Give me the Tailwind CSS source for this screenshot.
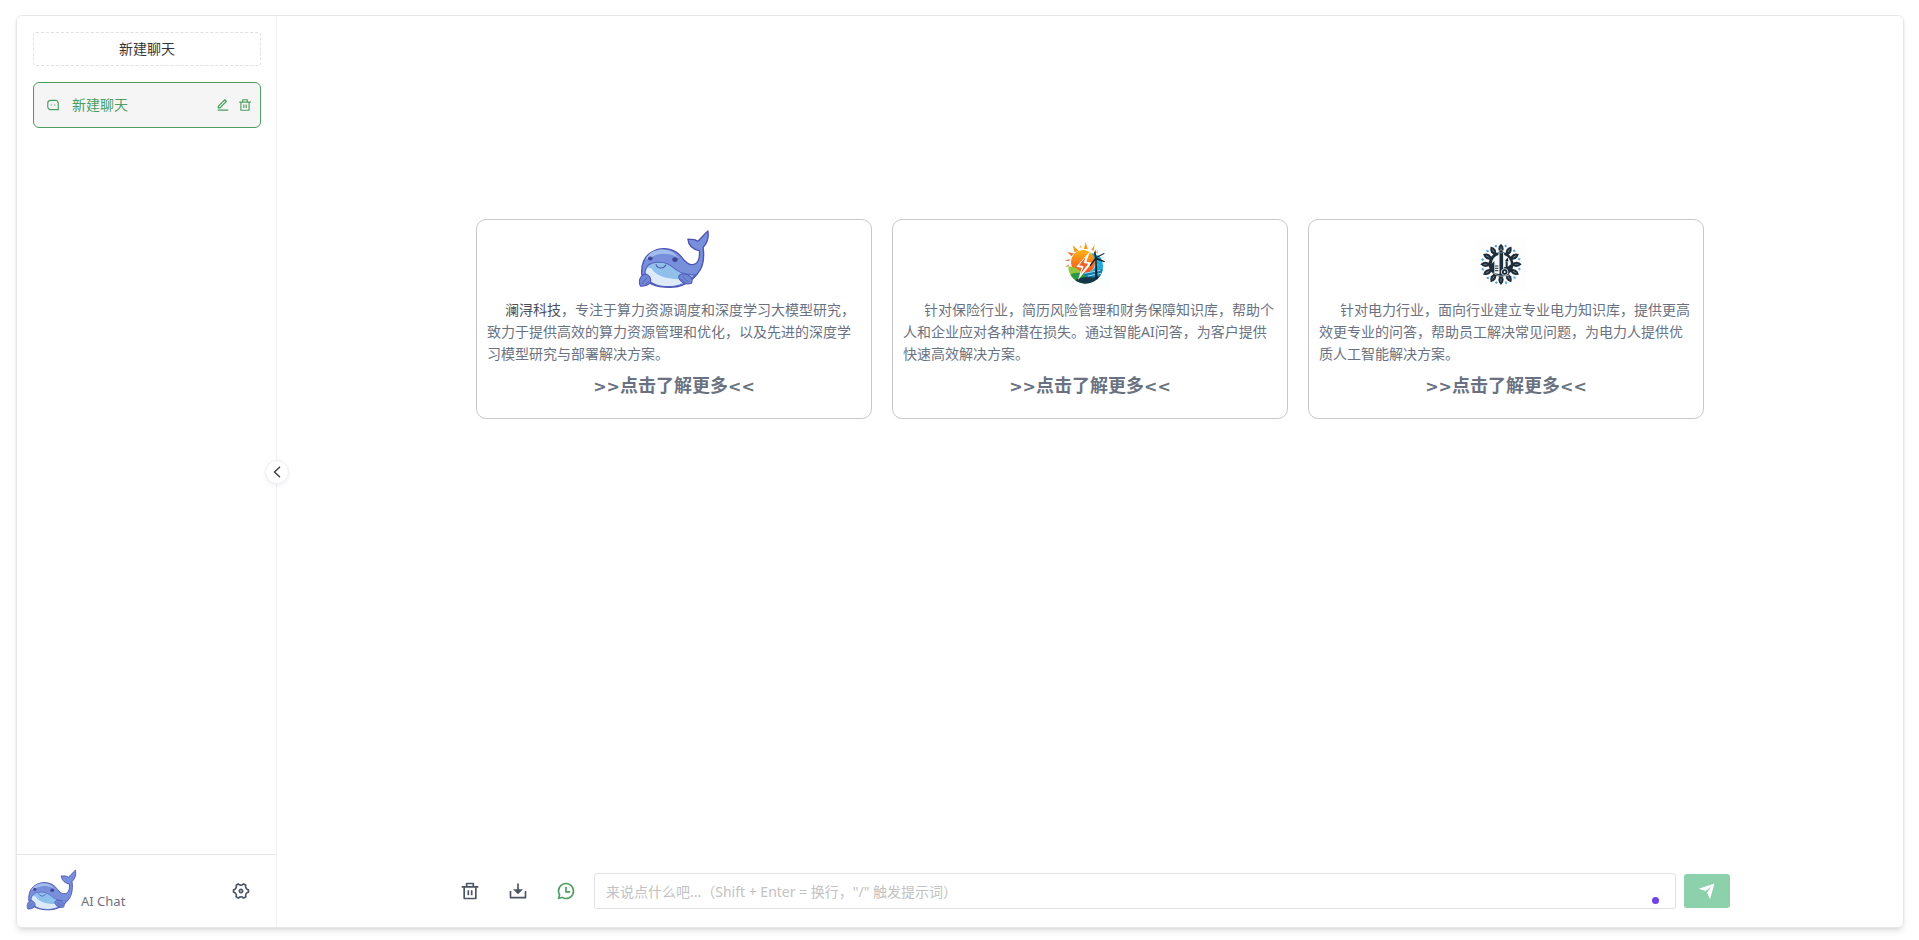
<!DOCTYPE html>
<html lang="zh-CN">
<head>
<meta charset="utf-8">
<meta name="viewport" content="width=device-width, initial-scale=1">
<title>AI Chat</title>
<script src="https://cdn.jsdelivr.net/npm/@tailwindcss/browser@4"></script>
</head>
<body class="bg-white font-['Noto_Sans','Noto_Sans_CJK_SC',sans-serif] text-sm text-[#333639]">
<svg class="hidden" aria-hidden="true">
  <symbol id="trash" viewBox="0 0 24 24"><path fill="currentColor" d="M17 6h5v2h-2v13a1 1 0 0 1-1 1H5a1 1 0 0 1-1-1V8H2V6h5V3a1 1 0 0 1 1-1h8a1 1 0 0 1 1 1v3Zm1 2H6v12h12V8Zm-9 3h2v6H9v-6Zm4 0h2v6h-2v-6ZM9 4v2h6V4H9Z"/></symbol>
  <symbol id="whale" viewBox="25 15 212 180">
    <path fill="#7890dc" stroke="#4f54b4" stroke-width="4" stroke-linejoin="round" d="M36 152C34 124 42 101 62 88C88 70 122 73 144 91C158 103 164 121 182 123C201 124 208 107 206 82C190 79 174 69 172 48C183 50 191 45 201 54C212 46 218 35 231 24C234 42 232 56 217 72C221 103 216 133 200 150C181 174 157 190 119 190C78 190 49 180 36 152Z"/>
    <path fill="#a2bcec" d="M46 108C57 86 79 77 102 79C124 80 137 93 145 104C119 86 82 86 57 106Z"/>
    <path fill="#8fc0ec" stroke="#565fbd" stroke-width="3" d="M45 148C46 128 60 117 84 116C113 115 121 126 140 140C157 151 173 154 193 153C175 177 147 188 112 188C80 187 53 176 45 148Z"/>
    <path fill="#dceafa" d="M49 142C50 133 56 130 64 134C76 154 104 166 145 166L168 172C143 188 104 190 77 180C59 174 49 160 49 142Z"/>
    <path fill="none" stroke="#4a51a9" stroke-width="3" stroke-linecap="round" d="M78 123C82 135 99 137 107 124"/>
    <ellipse cx="61" cy="105" rx="7" ry="6" fill="#404693"/><ellipse cx="134" cy="108" rx="8" ry="7" fill="#404693"/>
    <g fill="#6f87d4" stroke="#4f54b4" stroke-width="3" stroke-linejoin="round">
      <path d="M47 151C58 154 66 165 61 176C56 184 45 187 32 187C27 179 28 166 34 158Q39 152 47 151Z"/>
      <path d="M145 157C151 145 170 150 181 160C186 165 185 176 181 179C162 184 145 172 145 157Z"/>
      <path fill="none" stroke-width="2" d="M36 180Q43 169 52 162M47 182L57 172M156 157Q164 169 174 174M151 165Q158 174 167 178"/>
    </g>
  </symbol>
</svg>

<div class="flex h-screen pt-[15px] pr-[15px] pb-3 pl-4">
  <div class="flex min-w-0 flex-1 rounded-md border border-gray-200 shadow-md">

    <aside class="relative flex w-[260px] shrink-0 flex-col border-r border-[#efeff5]">
      <div class="flex flex-1 flex-col gap-4 p-4 pr-[15px]">
        <button class="h-[34px] rounded-[3px] border border-dashed border-[#e0e0e6]">新建聊天</button>
        <div class="flex h-[46px] items-center rounded-md border border-[#4b9e5f] bg-neutral-100 pr-2 pl-3 text-[#4b9e5f]">
          <svg class="size-[14px]" viewBox="0 0 24 24"><path fill="currentColor" d="M2 8.994A5.99 5.99 0 0 1 8 3h8c3.313 0 6 2.695 6 5.994V21H8c-3.313 0-6-2.695-6-5.994V8.994ZM20 19V8.994A4.004 4.004 0 0 0 16 5H8a3.99 3.99 0 0 0-4 3.994v6.012A4.004 4.004 0 0 0 8 19h12Zm-6-8h2v2h-2v-2Zm-6 0h2v2H8v-2Z"/></svg>
          <a href="#" class="ml-3 flex-1">新建聊天</a>
          <div class="flex gap-2">
            <button aria-label="编辑"><svg class="size-[14px]" viewBox="0 0 24 24"><path fill="currentColor" d="m6.414 15.89 9.728-9.728-1.414-1.414L5 14.476v1.414h1.414Zm.829 2H3v-4.243L14.435 2.212a1 1 0 0 1 1.414 0l2.829 2.829a1 1 0 0 1 0 1.414L7.243 17.89ZM3 19.89h18v2H3v-2Z"/></svg></button>
            <button aria-label="删除"><svg class="size-[14px]"><use href="#trash"/></svg></button>
          </div>
        </div>
      </div>
      <footer class="flex h-[73px] items-center border-t border-gray-200 pr-[15px] pl-[9px]">
        <svg class="mb-1 h-[43px] w-[51px]" role="img" aria-label="澜浔科技"><use href="#whale"/></svg>
        <span class="mt-5 ml-1 flex-1 text-[13px] text-gray-500">AI Chat</span>
        <button class="flex size-10 items-center justify-center text-[#4b5563]" aria-label="设置">
          <svg class="size-5" viewBox="0 0 24 24"><path fill="currentColor" d="M2 11.9998C2 11.1353 2.1097 10.2964 2.31595 9.49631C3.40622 9.55283 4.48848 9.01015 5.0718 7.99982C5.65467 6.99025 5.58406 5.78271 4.99121 4.86701C6.18354 3.69529 7.66832 2.82022 9.32603 2.36133C9.8222 3.33385 10.8333 3.99982 12 3.99982C13.1667 3.99982 14.1778 3.33385 14.674 2.36133C16.3317 2.82022 17.8165 3.69529 19.0088 4.86701C18.4159 5.78271 18.3453 6.99025 18.9282 7.99982C19.5115 9.01015 20.5938 9.55283 21.6841 9.49631C21.8903 10.2964 22 11.1353 22 11.9998C22 12.8643 21.8903 13.7032 21.6841 14.5033C20.5938 14.4468 19.5115 14.9895 18.9282 15.9998C18.3453 17.0094 18.4159 18.2169 19.0088 19.1326C17.8165 20.3043 16.3317 21.1794 14.674 21.6383C14.1778 20.6658 13.1667 19.9998 12 19.9998C10.8333 19.9998 9.8222 20.6658 9.32603 21.6383C7.66832 21.1794 6.18354 20.3043 4.99121 19.1326C5.58406 18.2169 5.65467 17.0094 5.0718 15.9998C4.48848 14.9895 3.40622 14.4468 2.31595 14.5033C2.1097 13.7032 2 12.8643 2 11.9998ZM6.80385 14.9998C7.43395 16.0912 7.61458 17.3459 7.36818 18.5236C7.77597 18.8138 8.21005 19.0652 8.66489 19.2741C9.56176 18.4712 10.7392 17.9998 12 17.9998C13.2608 17.9998 14.4382 18.4712 15.3351 19.2741C15.7899 19.0652 16.224 18.8138 16.6318 18.5236C16.3854 17.3459 16.566 16.0912 17.1962 14.9998C17.8262 13.9085 18.8225 13.1248 19.9655 12.7493C19.9884 12.5015 20 12.2516 20 11.9998C20 11.7481 19.9884 11.4981 19.9655 11.2504C18.8225 10.8749 17.8262 10.0912 17.1962 8.99982C16.566 7.90845 16.3854 6.65378 16.6318 5.47605C16.224 5.18588 15.7899 4.93445 15.3351 4.72552C14.4382 5.52844 13.2608 5.99982 12 5.99982C10.7392 5.99982 9.56176 5.52844 8.66489 4.72552C8.21005 4.93445 7.77597 5.18588 7.36818 5.47605C7.61458 6.65378 7.43395 7.90845 6.80385 8.99982C6.17376 10.0912 5.17754 10.8749 4.0345 11.2504C4.01157 11.4981 4 11.7481 4 11.9998C4 12.2516 4.01157 12.5015 4.0345 12.7493C5.17754 13.1248 6.17376 13.9085 6.80385 14.9998ZM12 14.9998C10.3431 14.9998 9 13.6567 9 11.9998C9 10.3429 10.3431 8.99982 12 8.99982C13.6569 8.99982 15 10.3429 15 11.9998C15 13.6567 13.6569 14.9998 12 14.9998ZM12 12.9998C12.5523 12.9998 13 12.5521 13 11.9998C13 11.4475 12.5523 10.9998 12 10.9998C11.4477 10.9998 11 11.4475 11 11.9998C11 12.5521 11.4477 12.9998 12 12.9998Z"/></svg>
        </button>
      </footer>
      <button class="absolute top-1/2 -right-px flex size-6 translate-x-1/2 -translate-y-1/2 items-center justify-center rounded-full border border-[#efeff5] bg-white shadow-[0_2px_4px_rgba(0,0,0,0.06)]" aria-label="收起侧栏">
        <svg class="h-3 w-2" viewBox="0 0 8 12" fill="none" stroke="currentColor" stroke-width="1.3"><path d="M7 .8 1.5 6 7 11.2"/></svg>
      </button>
    </aside>

    <div class="flex min-w-0 flex-1 flex-col">
      <main class="flex-1 pt-[203px]">
        <div class="mx-auto grid max-w-[1228px] grid-cols-3 gap-5 text-gray-500">
          <article class="min-h-[200px] rounded-[10px] border border-[#c8c8cc] px-[10px]">
            <div class="flex h-[79px] items-end justify-center pb-[10px]">
              <svg class="h-[61px] w-[72px]" role="img" aria-label="澜浔科技"><use href="#whale"/></svg>
            </div>
            <p class="indent-[18px] leading-[22px]"><span class="leading-none text-[#4b5058]">澜浔科技</span>，专注于算力资源调度和深度学习大模型研究，致力于提供高效的算力资源管理和优化，以及先进的深度学习模型研究与部署解决方案。</p>
            <a href="#" class="mt-1 block text-center text-lg leading-8 font-bold"><span class="font-['DejaVu_Sans'] text-base leading-none">&gt;&gt;</span>点击了解更多<span class="font-['DejaVu_Sans'] text-base leading-none">&lt;&lt;</span></a>
          </article>

          <article class="min-h-[200px] rounded-[10px] border border-[#c8c8cc] px-[10px]">
            <div class="flex h-[79px] items-end justify-center pr-[10px] pb-[10px]">
              <svg class="size-[50px] bg-[#fcfefd]" viewBox="15 21 150 150" role="img" aria-label="保险行业">
                <defs>
                  <linearGradient id="sun" x1="0" y1="0" x2="0" y2="1"><stop offset="0" stop-color="#fcb414"/><stop offset="1" stop-color="#f04a24"/></linearGradient>
                  <clipPath id="disc"><circle cx="92" cy="103" r="52"/></clipPath>
                </defs>
                <path fill="#f79a1c" d="M60 65 53 40 72 57ZM86 55 92 30 99 55ZM106 58 119 38 115 63Z"/>
                <path fill="#f26a2a" d="M52 74 36 60 60 65ZM45 88 30 86 48 80ZM42 103 31 105 44 95Z"/>
                <path fill="#f8b13c" d="m73 46 4-7 3 9ZM122 62l7-9-1 12Z"/>
                <g clip-path="url(#disc)">
                  <path fill="#fff" d="M40 50h110v110H40z"/>
                  <path fill="#20a9dc" d="M112 63 150 80V140H82L96 112Z"/>
                  <path fill="#9bddeb" d="m98 117 26-24 4 6-24 24Z"/>
                  <circle cx="84" cy="90" r="36" fill="url(#sun)"/>
                  <path fill="#91c83e" d="M38 103Q65 103 82 124L96 136 90 155H38Z"/>
                  <path fill="#2b9847" d="M42 129Q72 112 108 136L92 155H60Z"/>
                  <path fill="#157baf" d="M82 124 145 111V142H104Z"/>
                  <path stroke="#9be0ef" stroke-width="3" d="M88 124 136 115M98 132 139 124"/>
                  <path fill="#163747" d="M53 149Q78 132 107 136 126 139 141 130L132 160H65Z"/>
                </g>
                <path fill="#fff" d="M105 58 64 104 80 107 69 144 111 92 94 89Z"/>
                <path fill="#f2602a" d="M92 75 72 100 86 103 77 126 100 95 86 93Z"/>
                <path fill="#14262f" d="M121 84 120 142H128L125 83 148 91 150 88 126 77 149 65 147 63 124 74 121 53 117 63 120 78 104 100 107 103Z"/>
              </svg>
            </div>
            <p class="indent-[21px] leading-[22px]">针对保险行业，简历风险管理和财务保障知识库，帮助个人和企业应对各种潜在损失。通过智能AI问答，为客户提供快速高效解决方案。</p>
            <a href="#" class="mt-1 block text-center text-lg leading-8 font-bold"><span class="font-['DejaVu_Sans'] text-base leading-none">&gt;&gt;</span>点击了解更多<span class="font-['DejaVu_Sans'] text-base leading-none">&lt;&lt;</span></a>
          </article>

          <article class="min-h-[200px] rounded-[10px] border border-[#c8c8cc] px-[10px]">
            <div class="flex h-[79px] items-end justify-center pr-[10px] pb-[10px]">
              <svg class="size-[50px] bg-[#fdfdfd]" viewBox="-75 -76 150 150" role="img" aria-label="电力行业">
                <defs>
                  <g id="petal"><path fill="#1d2d3a" d="M-4-32-8-46-6-54 0-62 6-54 8-46 4-32Z"/><path stroke="#8b9aa5" stroke-width="2" d="M0-52v10"/><path stroke="#4d9fe6" stroke-width="3" d="M14-59v8M10-55h8"/></g>
                </defs>
                <use href="#petal"/><use href="#petal" transform="rotate(30)"/><use href="#petal" transform="rotate(60)"/><use href="#petal" transform="rotate(90)"/><use href="#petal" transform="rotate(120)"/><use href="#petal" transform="rotate(150)"/><use href="#petal" transform="rotate(180)"/><use href="#petal" transform="rotate(210)"/><use href="#petal" transform="rotate(240)"/><use href="#petal" transform="rotate(270)"/><use href="#petal" transform="rotate(300)"/><use href="#petal" transform="rotate(330)"/>
                <circle r="37" fill="#1d2d3a"/>
                <path fill="#f4f6f7" d="M-6-29V29L-20 27V-9L-28-2Q-25-24-6-29ZM8-29Q29-22 30 0L20 7V-6L14-9V8H8Z"/>
                <path fill="#1d2d3a" d="M-4 26V-31L1-43 6-31V26Z"/>
                <path stroke="#f4f6f7" stroke-width="3" d="M-6-35V29M8-34V13M-15-5v27"/>
                <path stroke="#1d2d3a" stroke-width="3" d="M-18 5h10M-18 12h10M-18 19h10M20-19l-6 9h8"/>
                <circle cx="11" cy="23" r="10" fill="#1d2d3a" stroke="#cdd5da" stroke-width="3"/><circle cx="11" cy="23" r="3" fill="#fff"/>
                <circle cy="-39" r="5" fill="none" stroke="#a8b4bd" stroke-width="2"/>
                <path stroke="#dce2e5" stroke-width="2" d="M-25 25Q0 43 25 32" fill="none"/>
              </svg>
            </div>
            <p class="indent-[21px] leading-[22px]">针对电力行业，面向行业建立专业电力知识库，提供更高效更专业的问答，帮助员工解决常见问题，为电力人提供优质人工智能解决方案。</p>
            <a href="#" class="mt-1 block text-center text-lg leading-8 font-bold"><span class="font-['DejaVu_Sans'] text-base leading-none">&gt;&gt;</span>点击了解更多<span class="font-['DejaVu_Sans'] text-base leading-none">&lt;&lt;</span></a>
          </article>
        </div>
      </main>

      <footer class="py-[18px]">
        <div class="mx-auto flex max-w-[1280px] items-center gap-2 text-[#4b5563]">
          <button class="flex h-9 w-10 items-center justify-center" aria-label="清空"><svg class="size-5"><use href="#trash"/></svg></button>
          <button class="flex h-9 w-10 items-center justify-center" aria-label="导出"><svg class="size-5" viewBox="0 0 24 24"><path fill="currentColor" d="M13 10h5l-6 6-6-6h5V3h2v7Zm-9 9h16v-7h2v8a1 1 0 0 1-1 1H3a1 1 0 0 1-1-1v-8h2v7Z"/></svg></button>
          <button class="flex h-9 w-10 items-center justify-center text-[#4b9e5f]" aria-label="上下文"><svg class="size-5" viewBox="0 0 24 24"><path fill="currentColor" d="M12 2c5.523 0 10 4.477 10 10s-4.477 10-10 10a9.96 9.96 0 0 1-4.708-1.175L2 22l1.176-5.29A9.956 9.956 0 0 1 2 12C2 6.477 6.477 2 12 2Zm0 2a8 8 0 0 0-8 8c0 1.335.326 2.618.94 3.766l.35.654-.656 2.946 2.948-.655.653.349A7.955 7.955 0 0 0 12 20a8 8 0 1 0 0-16Zm1 3v5h4v2h-6V7h2Z"/></svg></button>
          <div class="relative flex min-w-0 flex-1">
            <input type="text" aria-label="消息" class="h-9 w-full rounded-[3px] border border-[#e0e0e6] px-[11px] text-sm placeholder:text-[#c2c2c2]" placeholder="来说点什么吧...（Shift + Enter = 换行，&quot;/&quot; 触发提示词）">
            <span class="absolute right-[17px] bottom-[5px] size-[7px] rounded-full bg-[#7040e8] shadow-[0_0_8px_4px_rgba(0,0,0,0.02)]"></span>
          </div>
          <button class="flex h-[34px] w-[46px] items-center justify-center rounded-[3px] bg-[#8dd0ac] text-white" aria-label="发送"><svg class="size-[18px]" viewBox="0 0 24 24"><path fill="currentColor" d="M1.946 9.315c-.522-.174-.527-.455.01-.634l19.087-6.362c.529-.176.832.12.684.638l-5.454 19.086c-.15.529-.455.547-.679.045L12 14l6-8-8 6-8.054-2.685Z"/></svg></button>
        </div>
      </footer>
    </div>
  </div>
</div>
</body>
</html>
